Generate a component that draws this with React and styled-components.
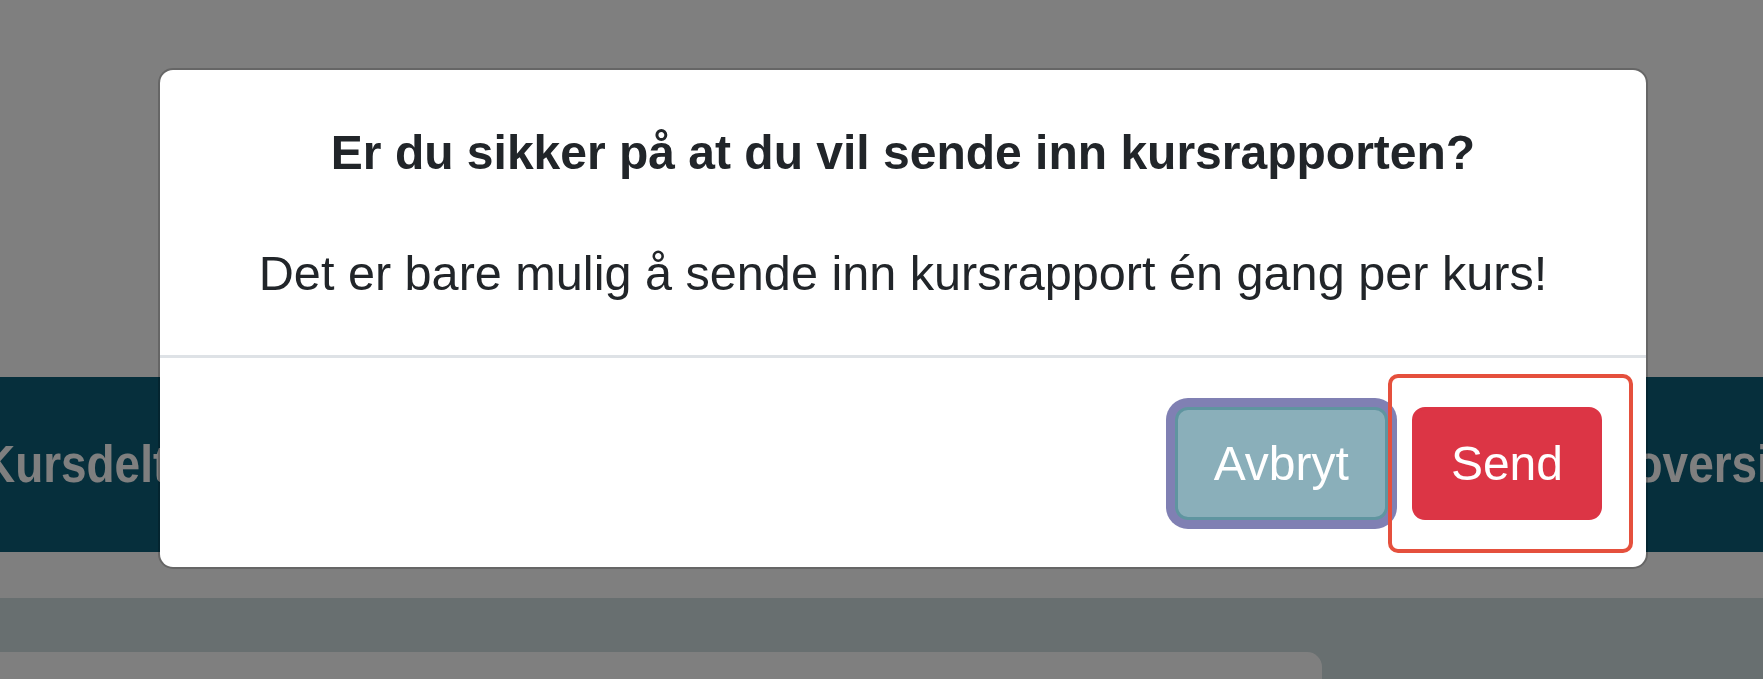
import React from "react";
import styled, { createGlobalStyle } from "styled-components";

const GlobalStyle = createGlobalStyle`
  html, body {
    margin: 0;
    padding: 0;
    overflow: hidden;
  }
  body {
    font-family: "Liberation Sans", Arial, sans-serif;
    color: #212529;
  }
`;

const Page = styled.div`
  box-sizing: border-box;
  display: flex;
  flex-direction: column;
  height: 100vh;
  background: #ffffff;
  overflow: hidden;
`;

const TopArea = styled.div`
  height: 377px;
  flex-shrink: 0;
`;

const NavBar = styled.nav`
  display: grid;
  grid-template-columns: 1548px auto;
  align-items: center;
  height: 175px;
  flex-shrink: 0;
  margin-left: -18px;
  background: #0c5e78;
  overflow: hidden;
`;

const NavTab = styled.span`
  display: inline-block;
  font-weight: 700;
  font-size: 51px;
  line-height: 1;
  color: #ffffff;
  white-space: nowrap;
  transform: scaleX(0.9);
  transform-origin: left center;
`;

const Content = styled.div`
  flex: 1;
  margin-top: 46px;
  padding-top: 54px;
  background: #d0dee0;
`;

const Card = styled.div`
  width: 1362px;
  height: 100%;
  margin-left: -40px;
  background: #ffffff;
  border-radius: 15px 15px 0 0;
`;

const Backdrop = styled.div`
  position: fixed;
  inset: 0;
  box-sizing: border-box;
  padding: 68px 0 0 158px;
  background: rgba(0, 0, 0, 0.5);
`;

const Modal = styled.div`
  box-sizing: border-box;
  width: 1490px;
  background: #ffffff;
  background-clip: padding-box;
  border: 2px solid rgba(0, 0, 0, 0.2);
  border-radius: 15px;
`;

const ModalBody = styled.div`
  display: flex;
  flex-direction: column;
  gap: 48px;
  padding: 47px 48px 46px;
  border-bottom: 3px solid #dee2e6;
  text-align: center;
`;

const Title = styled.h5`
  margin: 0;
  font-size: 48px;
  line-height: 72px;
  font-weight: 700;
  color: #212529;
`;

const Text = styled.p`
  margin: 0;
  font-size: 48.6px;
  line-height: 72px;
  font-weight: 400;
  color: #212529;
`;

const Footer = styled.div`
  display: flex;
  justify-content: flex-end;
  align-items: center;
  gap: 24px;
  padding: 49px 44px 47px;
`;

const Button = styled.button`
  box-sizing: border-box;
  display: inline-flex;
  align-items: center;
  justify-content: center;
  height: 113px;
  padding: 0 36px;
  font-family: "Liberation Sans", Arial, sans-serif;
  font-size: 48px;
  color: #ffffff;
  background: ${p => p.bg};
  border: 3px solid ${p => p.border || p.bg};
  border-radius: 13px;
  box-shadow: ${p => (p.focused ? "0 0 0 9px #8080b3" : "none")};
  cursor: pointer;
`;

const Highlight = styled.div`
  position: relative;
  display: flex;
`;

const HighlightFrame = styled.span`
  position: absolute;
  top: -33px;
  bottom: -33px;
  left: -24px;
  right: -31px;
  border: 4px solid #e5503d;
  border-radius: 10px;
  pointer-events: none;
`;

export default function App() {
  return (
    <>
      <GlobalStyle />
      <Page>
        <TopArea />
        <NavBar>
          <NavTab>Kursdeltakere</NavTab>
          <NavTab>Kursoversikt</NavTab>
        </NavBar>
        <Content>
          <Card />
        </Content>
      </Page>
      <Backdrop>
        <Modal role="dialog">
          <ModalBody>
            <Title>Er du sikker på at du vil sende inn kursrapporten?</Title>
            <Text>Det er bare mulig å sende inn kursrapport én gang per kurs!</Text>
          </ModalBody>
          <Footer>
            <Button bg="#8aafba" border="#5f95a0" focused>
              Avbryt
            </Button>
            <Highlight>
              <Button bg="#dc3545">Send</Button>
              <HighlightFrame />
            </Highlight>
          </Footer>
        </Modal>
      </Backdrop>
    </>
  );
}
